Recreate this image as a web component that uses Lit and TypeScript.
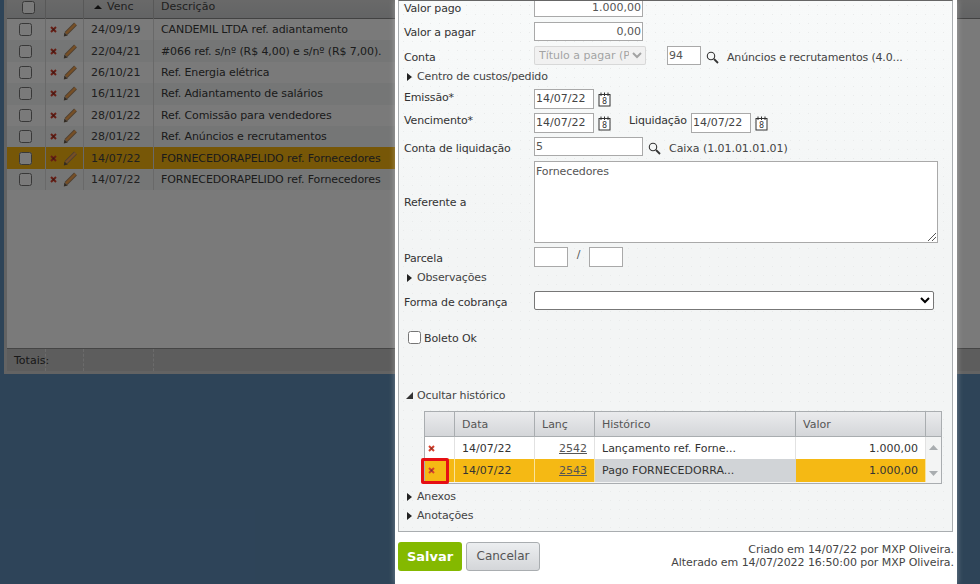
import { LitElement, html, css } from "lit";
import { customElement } from "lit/decorators.js";

const xIcon = html`<svg class="xi" width="7" height="7" viewBox="0 0 7 7"><path d="M1 1L6 6M6 1L1 6" stroke="#d8402c" stroke-width="2" fill="none"/><rect x="2.500" y="2.500" width="2" height="2" fill="#7a3a30"/></svg>`;
const pencil = html`<svg class="pi" width="14" height="15" viewBox="0 0 14 15"><path d="M3 11.500L12.500 2" stroke="#a58465" stroke-width="4" fill="none"/><path d="M3 11.500L12.500 2" stroke="#f6a650" stroke-width="2.400" fill="none"/><path d="M.8 14.500L1.400 10.500L4.800 13.500Z" fill="#6b5a48"/></svg>`;
const search = html`<svg class="si" width="13" height="13" viewBox="0 0 13 13"><circle cx="5" cy="5" r="3.700" fill="none" stroke="#333" stroke-width="1.100"/><path d="M8 8L12 12" stroke="#333" stroke-width="1.800"/></svg>`;
const cal = html`<svg class="ci" width="13" height="15" viewBox="0 0 13 15"><rect x="1" y="2.500" width="11" height="11.500" fill="#fff" stroke="#333"/><path d="M3 .5V4M6.500 .5V4M10 .5V4" stroke="#333"/><text x="6.500" y="12" font-size="8" text-anchor="middle" font-family="DejaVu Sans" fill="#333">8</text></svg>`;

const rows = [
  ["24/09/19", "CANDEMIL LTDA ref. adiantamento"],
  ["22/04/21", "#066 ref. s/nº (R$ 4,00) e s/nº (R$ 7,00)."],
  ["26/10/21", "Ref. Energia elétrica"],
  ["16/11/21", "Ref. Adiantamento de salários"],
  ["28/01/22", "Ref. Comissão para vendedores"],
  ["28/01/22", "Ref. Anúncios e recrutamentos"],
  ["14/07/22", "FORNECEDORAPELIDO ref. Fornecedores"],
  ["14/07/22", "FORNECEDORAPELIDO ref. Fornecedores"],
];

@customElement("app-root")
export class AppRoot extends LitElement {
  static styles = css`
    :host { display: block; position: relative; width: 980px; height: 584px; overflow: hidden; background: #608eb9; font: 11px/13px "DejaVu Sans", sans-serif; color: #444; }
    * { box-sizing: border-box; }
    input[type="checkbox"] { margin: 0; width: 13px; height: 13px; display: block; flex: none; }

    .win { margin-left: 4px; height: 374px; display: flex; flex-direction: column; background: #fff; border-left: 3px solid #d0d0d0; border-bottom: 3px solid #d0d0d0; }
    .thead, .tr, .tfoot { display: grid; grid-template-columns: 39px 38px 70px 1fr; flex: none; }
    .thead { height: 19px; background: linear-gradient(#dcdcdc, #cfd1d3); border-bottom: 1px solid #8a8a8a; }
    .thead > div { border-right: 1px solid #b8b8b8; display: flex; align-items: flex-end; padding-bottom: 7px; }
    .thead .h0 { padding-left: 15px; padding-bottom: 6px; }
    .thead .h2 { padding-left: 10px; gap: 5px; }
    .thead .h3 { padding-left: 7px; border-right: 0; }
    .tri-up { width: 8px; height: 4px; background: #222; clip-path: polygon(50% 0, 100% 100%, 0 100%); margin-bottom: 4px; }
    .tbody { flex: 1; width: 700px; }
    .tr { height: 21.400px; background: #fff; }
    .tr.alt { background: #f4f7f7; }
    .tr.sel { background: #f8b60f; }
    .tr > div { display: flex; align-items: center; border-right: 1px solid #dcdcdc; white-space: nowrap; overflow: hidden; }
    .tr .c0 { padding-left: 12px; }
    .tr .c1 { padding-left: 4px; gap: 6px; }
    .tr .c2 { padding-left: 7px; }
    .tr .c3 { padding-left: 7px; border-right: 0; color: #3a3a3a; letter-spacing: -0.100px; }
    .tfoot { height: 23px; background: #c2c2c2; border-top: 1px solid #909090; color: #333; }
    .tfoot > div { border-right: 1px dashed #e0e0e0; display: flex; align-items: center; }
    .tfoot .f0 { padding-left: 7px; overflow: visible; }
    .tfoot .f3 { border-right: 0; }

    .overlay { position: absolute; inset: 0; background: rgba(0, 0, 0, 0.52); }

    .modal { position: absolute; left: 395px; top: 0; width: 562px; height: 584px; background: #fff; box-shadow: 0 0 6px rgba(255, 255, 255, 0.35); display: flex; flex-direction: column; color: #333; }
    .panel { height: 532px; margin: 0 4px 0 3px; flex: none; overflow: hidden; border: 1px solid #a9adb0; border-top-color: #666; padding-left: 5px;
      background-image: radial-gradient(#e9ebeb 0.6px, transparent 0.8px), linear-gradient(#f8fafa, #f3f5f5 240px); background-size: 9px 9px, 100% 100%; }
    .form { margin-top: -3px; display: flex; flex-direction: column; }
    .r { display: flex; align-items: flex-start; flex: none; white-space: nowrap; }
    .h24 { height: 24px; } .h19 { height: 19px; } .h20 { height: 20px; } .h22 { height: 22px; } .h86 { height: 86px; } .h40 { height: 40px; } .h58 { height: 58px; }
    .lab { width: 130px; flex: none; padding-top: 4.500px; letter-spacing: -0.150px; }
    .lab.t3 { padding-top: 3.500px; } .lab.t1 { padding-top: 1.500px; } .lab.t0 { padding-top: 1px; } .lab.t34 { padding-top: 34.500px; }
    .inp { height: 19px; background: #fff; border: 1px solid #a9a9a9; padding: 0 1px; line-height: 17px; color: #555; flex: none; }
    .num { text-align: right; width: 109px; }
    .w34 { width: 34px; } .w60 { width: 60px; height: 20px; line-height: 18px; color: #444; } .w109 { width: 109px; height: 19px; } .h20i { height: 20px; }
    .sel1 { width: 112px; height: 19px; font: 11px "DejaVu Sans", sans-serif; flex: none; border-radius: 2px; }
    .sel2 { width: 400px; height: 19px; font: 11px "DejaVu Sans", sans-serif; flex: none; background: #fff; border: 1px solid #777; border-radius: 2px; }
    .ml21 { margin-left: 21px; }
    .si { flex: none; margin: 5px 0 0 5px; }
    .ci { flex: none; margin: 3px 0 0 4px; }
    .txt { margin: 5px 0 0 8px; color: #444; letter-spacing: -0.150px; }
    .txt.tn { letter-spacing: -0.050px; }
    .liq { margin: 0 4px 0 18px; padding-top: 1px; letter-spacing: -0.150px; }
    .area { width: 404px; height: 82px; background: #fff; border: 1px solid #a9a9a9; padding: 3px 1px; color: #555; white-space: pre-wrap; position: relative; letter-spacing: -0.100px; }
    .grip { position: absolute; right: 1px; bottom: 1px; }
    .slash { width: 21px; text-align: center; color: #555; padding-top: 1px; }
    .tog { display: flex; align-items: flex-start; gap: 5px; color: #444; padding-left: 3px; letter-spacing: -0.150px; }
    .tri-r { width: 5px; height: 8px; background: #222; clip-path: polygon(0 0, 100% 50%, 0 100%); margin-top: 3px; }
    .tri-d { width: 7px; height: 7px; background: #333; clip-path: polygon(100% 0, 100% 100%, 0 100%); margin-top: 3px; margin-right: -1px; margin-left: -1px; }
    .bol { padding-left: 4px; gap: 3px; align-items: flex-start; letter-spacing: -0.100px; }
    .bol span { line-height: 13px; margin-top: 1px; }

    .hist { position: relative; margin-left: 20px; width: 518px; height: 73px; border: 1px solid #a9adb0; display: grid; grid-template-columns: 30px 80px 60px 201px 130px 1fr; grid-template-rows: 25px 22px 23px; background: #f3f4f4; flex: none; }
    .hist > div { display: flex; align-items: center; padding: 0 7px; white-space: nowrap; overflow: hidden; }
    .hh { background: linear-gradient(#eaebed, #d4d6d9); border-bottom: 1px solid #a9adb0; border-right: 1px solid #a9adb0; color: #555; }
    .hist .hh.last { border-right: 0; }
    .hist .w { background: #fff; border-right: 1px solid #e2e2e2; }
    .hist .y { background: #f5b914; border-right: 1px solid #f9e39a; color: #333; }
    .hist .g { background: #d1d4d7; border-right: 1px solid #d1d4d7; }
    .hist .ico { padding: 0 0 0 3px; }
    .hist .rt { justify-content: flex-end; }
    .hist .lnk { color: #555; text-decoration: underline; }
    .hist .sb { grid-row: span 2; flex-direction: column; justify-content: space-between; align-items: center; padding: 8px 0 6px; }
    .up { width: 9px; height: 5px; background: #a9adb0; clip-path: polygon(50% 0, 100% 100%, 0 100%); }
    .dn { width: 9px; height: 5px; background: #a9adb0; clip-path: polygon(0 0, 100% 0, 50% 100%); }
    .mark { position: absolute; left: -4px; top: 46px; width: 28px; height: 26px; border: 3px solid #e60f14; border-radius: 2px; }
    .after { margin-top: 6px; }

    .foot { flex: 1; display: flex; align-items: flex-start; padding: 10px 3px 0 3px; }
    .btn { height: 29px; border-radius: 3px; display: flex; align-items: center; justify-content: center; font-size: 12px; }
    .save { width: 64px; background: #84b900; color: #fff; font-weight: bold; font-size: 13px; }
    .cancel { width: 74px; margin-left: 4px; background: linear-gradient(#eceef0, #d4d6d9); border: 1px solid #a9adb0; color: #555; }
    .meta { margin-left: auto; text-align: right; color: #444; padding-top: 1px; letter-spacing: -0.060px; }
  `;

  render() {
    return html`
      <div class="win">
        <div class="thead">
          <div class="h0"><input type="checkbox" /></div>
          <div></div>
          <div class="h2"><span class="tri-up"></span><span>Venc</span></div>
          <div class="h3">Descrição</div>
        </div>
        <div class="tbody">
          ${rows.map(
            (r, i) => html`<div class="tr ${i === 6 ? "sel" : i % 2 ? "alt" : ""}">
              <div class="c0"><input type="checkbox" /></div>
              <div class="c1">${xIcon}${pencil}</div>
              <div class="c2">${r[0]}</div>
              <div class="c3">${r[1]}</div>
            </div>`
          )}
        </div>
        <div class="tfoot">
          <div class="f0">Totais:</div><div></div><div></div><div class="f3"></div>
        </div>
      </div>
      <div class="overlay"></div>
      <div class="modal">
        <div class="panel">
          <div class="form">
            <div class="r h24"><span class="lab t3">Valor pago</span><div class="inp num">1.000,00</div></div>
            <div class="r h24"><span class="lab t3">Valor a pagar</span><div class="inp num">0,00</div></div>
            <div class="r h24">
              <span class="lab">Conta</span>
              <select class="sel1" disabled><option>Título a pagar (Passivo)</option></select>
              <div class="inp w34 ml21">94</div>${search}<span class="txt">Anúncios e recrutamentos (4.0...</span>
            </div>
            <div class="r h19"><div class="tog"><span class="tri-r"></span>Centro de custos/pedido</div></div>
            <div class="r h24"><span class="lab t1">Emissão*</span><div class="inp w60">14/07/22</div>${cal}</div>
            <div class="r h24">
              <span class="lab t0">Vencimento*</span><div class="inp w60">14/07/22</div>${cal}
              <span class="liq">Liquidação</span><div class="inp w60">14/07/22</div>${cal}
            </div>
            <div class="r h24">
              <span class="lab">Conta de liquidação</span><div class="inp w109">5</div>${search}<span class="txt tn">Caixa (1.01.01.01.01)</span>
            </div>
            <div class="r h86">
              <span class="lab t34">Referente a</span>
              <div class="area">Fornecedores<svg class="grip" width="9" height="9" viewBox="0 0 9 9"><path d="M1 9L9 1M5 9L9 5" stroke="#555" fill="none"/></svg></div>
            </div>
            <div class="r h24">
              <span class="lab">Parcela</span><div class="inp w34 h20i"></div><span class="slash">/</span><div class="inp w34 h20i"></div>
            </div>
            <div class="r h20"><div class="tog"><span class="tri-r"></span>Observações</div></div>
            <div class="r h40"><span class="lab">Forma de cobrança</span><select class="sel2"><option></option></select></div>
            <div class="r h58 bol"><input type="checkbox" /><span>Boleto Ok</span></div>
            <div class="r h22"><div class="tog"><span class="tri-d"></span>Ocultar histórico</div></div>
            <div class="hist">
              <div class="hh"></div><div class="hh">Data</div><div class="hh">Lanç</div><div class="hh">Histórico</div><div class="hh">Valor</div><div class="hh last"></div>
              <div class="w ico">${xIcon}</div><div class="w">14/07/22</div><div class="w rt"><span class="lnk">2542</span></div><div class="w">Lançamento ref. Forne...</div><div class="w rt">1.000,00</div>
              <div class="sb"><span class="up"></span><span class="dn"></span></div>
              <div class="y ico">${xIcon}</div><div class="y">14/07/22</div><div class="y rt"><span class="lnk">2543</span></div><div class="g">Pago FORNECEDORRA...</div><div class="y rt">1.000,00</div>
              <span class="mark"></span>
            </div>
            <div class="r h19 after"><div class="tog"><span class="tri-r"></span>Anexos</div></div>
            <div class="r h22"><div class="tog"><span class="tri-r"></span>Anotações</div></div>
          </div>
        </div>
        <div class="foot">
          <div class="btn save">Salvar</div>
          <div class="btn cancel">Cancelar</div>
          <div class="meta">Criado em 14/07/22 por MXP Oliveira.<br />Alterado em 14/07/2022 16:50:00 por MXP Oliveira.</div>
        </div>
      </div>
    `;
  }
}
